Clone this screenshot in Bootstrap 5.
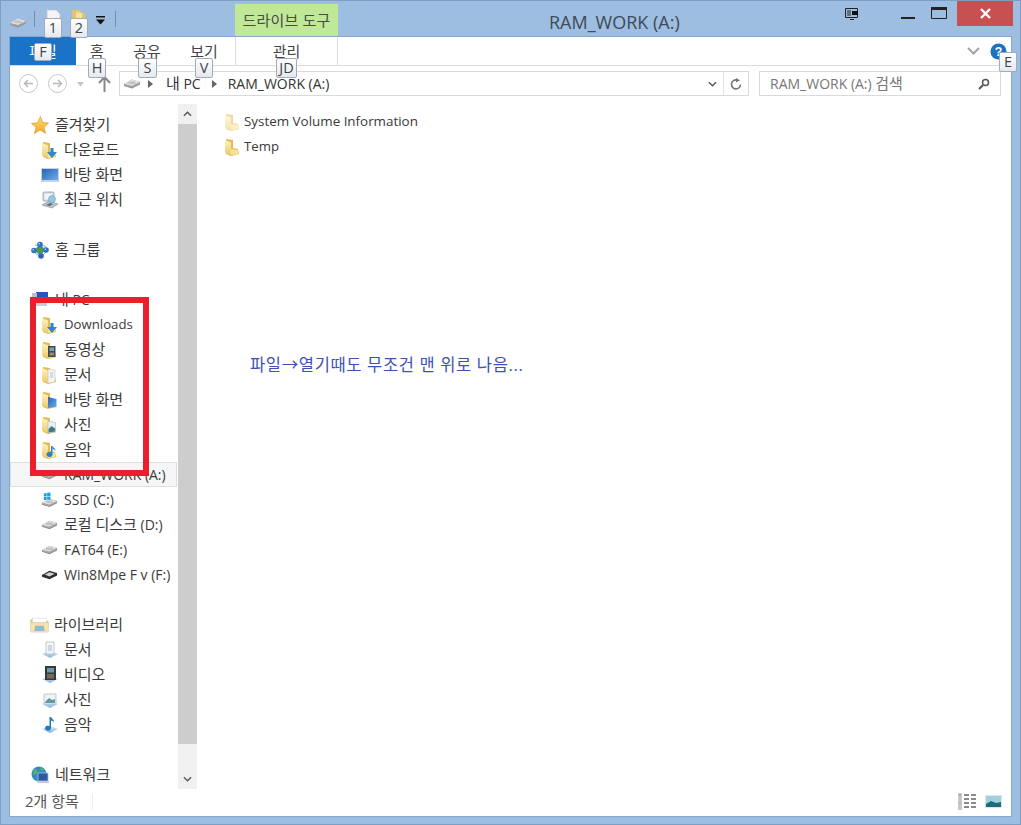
<!DOCTYPE html>
<html lang="ko">
<head>
<meta charset="utf-8">
<title>RAM_WORK (A:)</title>
<link href="https://cdn.jsdelivr.net/npm/bootstrap@5.3.0/dist/css/bootstrap.min.css" rel="stylesheet">
<style>
html,body{height:825px;overflow:hidden}
body{background:#9dbee1;font-family:"Open Sans","Noto Sans CJK KR",sans-serif;font-size:14px;color:#3a3a3a;line-height:1}
.xk{font-size:15px}
.xn{font-size:13.2px}
.xn2{font-size:13.4px}
.xw{position:relative;height:825px;width:1021px;border:1px solid #7e9fc4;padding:0 8px 8px 8px}
.xt{height:35px}
.xq{padding-top:9px;width:226px}
.xsep{width:1px;height:16px;background:#6f8db0;margin-top:1px}
.xs1{margin-left:7px;margin-right:10px}
.xs2{margin-left:9px}
.xdrv{margin-top:7px}
.xfo{margin-left:10px}
.xdd{margin-left:10px;margin-top:6px}
.xctx{width:103px;height:32px;margin-top:3px;background:#bfe997;color:#4a4a4a;text-align:center;padding-top:9px;font-size:15px;letter-spacing:.2px}
.xtitle{position:absolute;left:548px;top:12px;font-size:18px;color:#3d4a57}
.xrst{margin-top:7px;margin-right:42px}
.xmin{width:14px;height:2px;background:#222;margin-top:16px;margin-right:16px}
.xmax{margin-top:6px;margin-right:10px}
.xcl{width:56px;height:25px;background:#c75050;margin-right:-1px}
.xb{background:#fff;height:781px;border:1px solid #85a8cf}
.xrib{height:29px;border-bottom:1px solid #dadbdc;color:#444}
.xfile{width:66px;height:28px;background:#1a73c6;color:#fff;text-align:center;padding-top:7px}
.xtab{text-align:center;padding-top:7px}
.xt1{width:42px}.xt2{width:58px}.xt3{width:56px}
.xmg{border-left:1px solid #dadbdc;border-right:1px solid #dadbdc;width:103px;margin-left:3px;padding-top:7px;text-align:center}
.xchv{margin-right:10px}
.xhelp{margin-right:4px}
.xnav{height:36px;padding-top:5px}
.xbtns{width:109px;padding-left:9px;padding-top:3px}
.xroundb{width:19px;height:19px;border:1px solid #c8c8c8;border-radius:50%}
.xfw{margin-left:10px}
.xdn{margin-left:9px;margin-top:8px}
.xup{margin-left:13px;margin-top:1px}
.xaddr{width:630px;height:25px;border:1px solid #d9d9d9;color:#333}
.xad{margin-left:3px}
.xa1{margin-left:7px}
.xa2{margin-left:13px}
.xa3{margin-left:11px}
.xa4{margin-left:11px}
.xa5{margin-left:auto;margin-right:6px}
.xref{width:25px}
.xsrch{width:242px;height:25px;border:1px solid #d9d9d9;margin-left:10px;color:#777;padding:0 10px}
.xmain{height:688px}
.xside{width:187px;position:relative;flex:none;padding-top:10px}
.xrow{height:25px;display:flex;align-items:center;padding-left:21px;gap:6px;color:#3a3a3a;width:167px;white-space:nowrap}
.xsub{padding-left:31px;gap:7px}
.xg5{gap:5px}
.xg6{gap:6px}
.xlib{padding-left:20px;gap:5px}
.xgap{height:25px}
.xsel{background:#f6f6f6;outline:1px solid #dedede;outline-offset:-1px}
.xsb{position:absolute;left:168px;top:2px;width:19px;height:685px;background:#f0f0f0;display:flex;flex-direction:column}
.xsbb{height:20px;display:flex;align-items:center;justify-content:center;background:#f0f0f0}
.xth{height:620px;background:#cdcdcd}
.xtr{height:25px}
.xpane{padding:7px 0 0 27px;position:relative;flex:1}
.xitem{height:25px;display:flex;align-items:center;gap:4px}
.xnote{margin:198px 0 0 26px;color:#3c50b8;font-size:16.5px;letter-spacing:.65px}
.xst{height:27px;padding:0 9px 4px 15px;color:#555}
.xstsep{width:1px;height:16px;background:#eeeeee;margin-left:13px}
.xkt{position:absolute;height:20px;background:linear-gradient(#fff,#e4e9f2);border:1px solid #a4aab6;border-radius:2px;color:#444;font-size:14.5px;display:flex;align-items:center;justify-content:center;z-index:5}
.xred{position:absolute;left:29px;top:296px;width:119px;height:179px;border:6px solid #e8202c;z-index:6}
.k1{left:43px;top:17px;width:18px}
.k2{left:69px;top:17px;width:18px}
.kf{left:33px;top:42px;width:18px;height:18px}
.kh{left:87px;top:57px;width:18px}
.ks{left:137px;top:57px;width:19px}
.kv{left:194px;top:57px;width:18px}
.kj{left:275px;top:57px;width:21px}
.ke{left:998px;top:51px;width:18px}
</style>
</head>
<body>
<svg width="0" height="0" class="position-absolute">
<defs>
<linearGradient id="gf" x1="0" y1="0" x2="0" y2="1"><stop offset="0" stop-color="#fff3bf"/><stop offset="1" stop-color="#ecca6c"/></linearGradient>
<linearGradient id="gs" x1="0" y1="0" x2="0" y2="1"><stop offset="0" stop-color="#fde26a"/><stop offset="1" stop-color="#f0a632"/></linearGradient>
<linearGradient id="gb" x1="0" y1="0" x2="1" y2="1"><stop offset="0" stop-color="#2a62b0"/><stop offset="1" stop-color="#6aaef0"/></linearGradient>
<linearGradient id="gp" x1="0" y1="0" x2="0" y2="1"><stop offset="0" stop-color="#dff0fb"/><stop offset="1" stop-color="#7fb2dc"/></linearGradient>
<symbol id="drive" viewBox="0 0 18 11"><path d="M1 6 9 1.500 17 4v2.500L9 10.500 1 8z" fill="#8f8f8f"/><path d="M1 6 9 1.500 17 4 9 8z" fill="#e3e3e3"/><path d="M1 6 9 8.200 17 4.200v1.300L9 9.500 1 7.300z" fill="#a8a8a8"/><ellipse cx="9" cy="4.800" rx="4" ry="1.600" fill="#c3c3c3"/></symbol>
<symbol id="folder" viewBox="0 0 16 18"><path d="M2 1l7 1v8l5 1 1 5-8 2-5-2z" fill="#e3bb55"/><path d="M1 2l6 2.500V17l-6-2.500z" fill="url(#gf)"/><path d="M7 11l7 1v4l-7 1z" fill="#f6e29a"/></symbol>
<symbol id="fdown" viewBox="0 0 16 18"><use href="#folder" width="16" height="18"/><path d="M9.500 7h3v4H16l-5 6-5-6h3.500z" fill="#2f86c9"/></symbol>
<symbol id="fvid" viewBox="0 0 16 18"><use href="#folder" width="16" height="18"/><rect x="7" y="5" width="7.500" height="11" fill="#3c4c56"/><rect x="8.500" y="6.500" width="4.500" height="3.500" fill="#7da0a8"/><rect x="8.500" y="11.500" width="4.500" height="3" fill="#9a8a60"/></symbol>
<symbol id="fdoc" viewBox="0 0 16 18"><use href="#folder" width="16" height="18"/><path d="M7 3l7 1v12l-7 1z" fill="#f4f4f4" stroke="#c4c4c4" stroke-width=".6"/><path d="M9 7h3M9 9h3M9 11h3" stroke="#a7b8ca" stroke-width=".8"/></symbol>
<symbol id="fdesk" viewBox="0 0 16 18"><use href="#folder" width="16" height="18"/><path d="M7 6l8.500 2v8L7 17z" fill="url(#gb)"/></symbol>
<symbol id="fpic" viewBox="0 0 16 18"><use href="#folder" width="16" height="18"/><path d="M7 5l7.500 1.500V16L7 17z" fill="#e8f0f4" stroke="#aaa" stroke-width=".5"/><path d="M7.500 13l3-3 3.500 2.500V15.500l-6.500 1z" fill="#3d7a86"/></symbol>
<symbol id="fmus" viewBox="0 0 16 18"><use href="#folder" width="16" height="18"/><path d="M11.500 5v8.500a3 2.500 0 1 1-1.500-2.200V5z" fill="#2c7fc4"/><path d="M11.500 5c1 2 3 2 3 5-1-1.500-2-2-3-2z" fill="#2c7fc4"/></symbol>
<symbol id="star" viewBox="0 0 18 18"><path d="M9.500.500l2 6 6 .5-4.500 4.200 1.500 6L9 14l-5.500 3.500 1.600-6.300L.5 7.500l6-.7z" fill="url(#gs)" stroke="#d99a2a" stroke-width=".7"/></symbol>
<symbol id="desk" viewBox="0 0 18 14"><rect width="18" height="14" fill="#c9d2dc"/><rect x="1" y="1" width="16" height="11" fill="url(#gb)"/></symbol>
<symbol id="recent" viewBox="0 0 18 18"><rect x="2" y="1" width="11" height="9" rx="1" fill="#cfd8df" stroke="#8d9aa5" stroke-width=".7"/><rect x="3.500" y="2.500" width="8" height="6" fill="#f1f5f8"/><path d="M1 14l7-4 9 3-6 4z" fill="#b9c3cc" stroke="#7f8c97" stroke-width=".6"/><circle cx="11" cy="8" r="3.500" fill="#8fcde6" stroke="#6b8ea0" stroke-width=".5"/><path d="M5 14l4-2 3 1-3 2z" fill="#5f6c77"/></symbol>
<symbol id="home" viewBox="0 0 18 18"><path d="M4 4l10 1M4 12l6 4M14 5l1 6M10 16l5-5" stroke="#7fb0dc"/><circle cx="9" cy="9" r="4" fill="#4b9a48"/><circle cx="9" cy="3.500" r="2.800" fill="#2f6fc8"/><circle cx="3" cy="9.500" r="2.800" fill="#2f6fc8"/><circle cx="15" cy="9" r="2.800" fill="#2f6fc8"/><circle cx="10" cy="15" r="2.800" fill="#2f62b8"/><circle cx="8.300" cy="2.800" r=".8" fill="#cfe4fb"/><circle cx="2.300" cy="8.800" r=".8" fill="#cfe4fb"/><circle cx="14.300" cy="8.300" r=".8" fill="#cfe4fb"/></symbol>
<symbol id="pc" viewBox="0 0 18 18"><rect x="5" y="1" width="12" height="9" fill="#2a55b8"/><rect x="1" y="2" width="5" height="13" fill="#b8c0cc"/><path d="M4 12h12v3H4z" fill="#c8ccd4"/></symbol>
<symbol id="ssd" viewBox="0 0 18 16"><use href="#drive" y="5" width="18" height="11"/><path d="M3 1l3-.5V4H3zM6.500.4 10 0v4H6.500zM3 4.500h3V8H3zM6.500 4.500H10V8l-3.500-.5z" fill="#1ba0e2"/></symbol>
<symbol id="usb" viewBox="0 0 18 11"><path d="M1 6 9 1.500 17 4v2.500L9 10.500 1 8z" fill="#2e2e2e"/><path d="M4 5.500 9 3l5.500 1.800L9 7.500z" fill="#d2d2d2"/></symbol>
<symbol id="lib" viewBox="0 0 22 18"><path d="M1 3h7l2 2h11v12H1z" fill="#f2d487" stroke="#c9a860" stroke-width=".7"/><rect x="3" y="1" width="16" height="5" fill="#fff" stroke="#c9d0d6" stroke-width=".6"/><path d="M1 7h20v10H1z" fill="#f7e3a6"/><path d="M6 10h10l1 6H5z" fill="#8fbcd4"/></symbol>
<symbol id="ldoc" viewBox="0 0 18 18"><path d="M1 13l8-3 8 3-8 4z" fill="url(#gp)"/><path d="M5 1h8v12H5z" fill="#f4f6f8" stroke="#a9b4bf" stroke-width=".7"/><path d="M7 5h4M7 7h4M7 9h4" stroke="#96a9bd" stroke-width=".8"/></symbol>
<symbol id="lvid" viewBox="0 0 18 18"><path d="M1 13l8-3 8 3-8 4z" fill="url(#gp)"/><rect x="4" y="0" width="11" height="14" fill="#2e3a46"/><rect x="6" y="2" width="7" height="4.500" fill="#6f97a8"/><rect x="6" y="8" width="7" height="4.500" fill="#7b6a4f"/></symbol>
<symbol id="lpic" viewBox="0 0 18 18"><path d="M1 13l8-3 8 3-8 4z" fill="url(#gp)"/><path d="M3 3h12v10H3z" fill="#eef4f6" stroke="#a9b4bf" stroke-width=".7"/><path d="M4 11l4-4 3 2 3-1v4H4z" fill="#5f9aa3"/></symbol>
<symbol id="lmus" viewBox="0 0 18 18"><path d="M1 13l8-3 8 3-8 4z" fill="url(#gp)"/><path d="M10 1v11a3 2.500 0 1 1-1.500-2V1zM10 1c1 2 3 2 3 5-1-1-2-1.500-3-1.500z" fill="#2878bd"/></symbol>
<symbol id="net" viewBox="0 0 18 18"><circle cx="8" cy="8" r="7.500" fill="#2f8dc9"/><path d="M3 3c3 0 4 2 3 4S3 9 2 8zM9 1c3 1 4 2 4 4l-3-1z" fill="#5eb05a"/><rect x="7" y="7" width="10" height="8" fill="#2959a8" stroke="#b7c4d2" stroke-width=".8"/><rect x="6" y="15" width="12" height="2" fill="#c2cbd4"/></symbol>
<symbol id="chev" viewBox="0 0 10 6"><path d="M1 5l4-4 4 4" fill="none" stroke="#555" stroke-width="1.500"/></symbol>
<symbol id="chevd" viewBox="0 0 10 6"><path d="M1 1l4 4 4-4" fill="none" stroke="#555" stroke-width="1.500"/></symbol>
</defs>
</svg>

<div class="xw">
  <div class="xt d-flex">
    <div class="xq d-flex align-items-start">
      <svg class="xdrv" width="18" height="11"><use href="#drive"/></svg>
      <span class="xsep xs1"></span>
      <svg width="17" height="17" viewBox="0 0 17 17"><path d="M2 0h9l4 4v13H2z" fill="#f4f4f4" stroke="#ccc"/></svg>
      <svg class="xfo" width="13" height="17" viewBox="0 0 13 17"><path d="M0 0h8v2l5 1v13H0z" fill="#e5c566"/><path d="M4 2l6 1v11H4z" fill="#f4e39e"/></svg>
      <svg class="xdd" width="11" height="9" viewBox="0 0 11 9"><path d="M1 0h9v1.500H1z" fill="#111"/><path d="M1 3.500h9L5.500 8.500z" fill="#111"/></svg>
      <span class="xsep xs2"></span>
    </div>
    <div class="xctx">드라이브 도구</div>
    <div class="xtitle">RAM_WORK (A:)</div>
    <div class="ms-auto d-flex align-items-start">
      <svg class="xrst" width="14" height="12" viewBox="0 0 14 12"><path d="M.5.500h12v9H.5zM5 11.500h4" fill="none" stroke="#222"/><path d="M3 2v6M5 2v6" stroke="#222"/><rect x="7" y="3" width="6" height="4" fill="#111"/></svg>
      <span class="xmin d-block"></span>
      <svg class="xmax" width="16" height="12" viewBox="0 0 16 12"><path d="M.5.500h15v11H.5z" fill="none" stroke="#222"/><path d="M0 0h16v3H0z" fill="#222"/></svg>
      <span class="xcl d-flex justify-content-center align-items-center"><svg width="11" height="11" viewBox="0 0 11 11"><path d="M1 1l9 9M10 1l-9 9" stroke="#fff" stroke-width="2.400"/></svg></span>
    </div>
  </div>

  <div class="xb">
    <div class="xrib d-flex">
      <div class="xfile xk">파일</div>
      <div class="xtab xt1 xk">홈</div>
      <div class="xtab xt2 xk">공유</div>
      <div class="xtab xt3 xk">보기</div>
      <div class="xmg xk">관리</div>
      <div class="ms-auto d-flex align-items-center">
        <svg class="xchv" width="13" height="8" viewBox="0 0 13 8"><path d="M1 1l5.500 5.500L12 1" fill="none" stroke="#a3a3a3" stroke-width="2"/></svg>
        <svg class="xhelp" width="17" height="17" viewBox="0 0 18 18"><circle cx="9" cy="9" r="8.500" fill="#1e73be"/><text x="9" y="14" font-size="13" font-weight="700" text-anchor="middle" fill="#fff" font-family="Liberation Sans">?</text></svg>
      </div>
    </div>
    <div class="xnav d-flex">
      <div class="xbtns d-flex align-items-start">
        <span class="xroundb d-flex align-items-center justify-content-center"><svg width="11" height="9" viewBox="0 0 11 9"><path d="M10 4.500H2M5 1 1.500 4.500 5 8" fill="none" stroke="#b9b9b9" stroke-width="1.500"/></svg></span>
        <span class="xroundb xfw d-flex align-items-center justify-content-center"><svg width="11" height="9" viewBox="0 0 11 9"><path d="M1 4.500h8M6 1l3.500 3.500L6 8" fill="none" stroke="#b9b9b9" stroke-width="1.500"/></svg></span>
        <svg class="xdn" width="9" height="5" viewBox="0 0 9 5"><path d="M1 0h7L4.500 4.500z" fill="#c4c4c4"/></svg>
        <svg class="xup" width="13" height="17" viewBox="0 0 13 17"><path d="M6.500 17V3M1 8l5.500-6L12 8" fill="none" stroke="#888" stroke-width="2"/></svg>
      </div>
      <div class="xaddr d-flex align-items-center">
        <svg class="xad" width="18" height="11"><use href="#drive"/></svg>
        <svg class="xa1" width="5" height="8" viewBox="0 0 5 8"><path d="M0 0l5 4-5 4z" fill="#666"/></svg>
        <span class="xa2"><span class="xk">내</span> PC</span>
        <svg class="xa3" width="5" height="8" viewBox="0 0 5 8"><path d="M0 0l5 4-5 4z" fill="#666"/></svg>
        <span class="xa4">RAM_WORK (A:)</span>
        <svg class="xa5" width="9" height="6"><use href="#chevd"/></svg>
        <span class="xref d-flex align-items-center justify-content-center border-start h-100"><svg width="12" height="12" viewBox="0 0 12 12"><path d="M10.500 6.500A4.500 4.500 0 1 1 7 2" fill="none" stroke="#777" stroke-width="1.600"/><path d="M6 0l4 2.200L6 4.500z" fill="#777"/></svg></span>
      </div>
      <div class="xsrch d-flex align-items-center justify-content-between">
        <span>RAM_WORK (A:) <span class="xk">검색</span></span>
        <svg width="12" height="12" viewBox="0 0 12 12"><circle cx="7.500" cy="4.500" r="3" fill="none" stroke="#555" stroke-width="1.500"/><path d="M5 7l-4 4" stroke="#555" stroke-width="2"/></svg>
      </div>
    </div>
    <div class="xmain d-flex">
      <div class="xside">
        <div class="xrow"><svg width="18" height="20"><use href="#star"/></svg><span class="xk">즐겨찾기</span></div>
        <div class="xrow xsub"><svg width="16" height="18"><use href="#fdown"/></svg><span class="xk">다운로드</span></div>
        <div class="xrow xsub xg5"><svg width="18" height="14"><use href="#desk"/></svg><span class="xk">바탕 화면</span></div>
        <div class="xrow xsub xg5"><svg width="18" height="18"><use href="#recent"/></svg><span class="xk">최근 위치</span></div>
        <div class="xgap"></div>
        <div class="xrow"><svg width="18" height="18"><use href="#home"/></svg><span class="xk">홈 그룹</span></div>
        <div class="xgap"></div>
        <div class="xrow"><svg width="18" height="18"><use href="#pc"/></svg><span><span class="xk">내</span> PC</span></div>
        <div class="xrow xsub"><svg width="16" height="18"><use href="#fdown"/></svg><span class="xn">Downloads</span></div>
        <div class="xrow xsub"><svg width="16" height="18"><use href="#fvid"/></svg><span class="xk">동영상</span></div>
        <div class="xrow xsub"><svg width="16" height="18"><use href="#fdoc"/></svg><span class="xk">문서</span></div>
        <div class="xrow xsub"><svg width="16" height="18"><use href="#fdesk"/></svg><span class="xk">바탕 화면</span></div>
        <div class="xrow xsub"><svg width="16" height="18"><use href="#fpic"/></svg><span class="xk">사진</span></div>
        <div class="xrow xsub"><svg width="16" height="18"><use href="#fmus"/></svg><span class="xk">음악</span></div>
        <div class="xrow xsub xg6 xsel"><svg width="17" height="11"><use href="#drive"/></svg><span>RAM_WORK (A:)</span></div>
        <div class="xrow xsub xg6"><svg width="17" height="16"><use href="#ssd"/></svg><span>SSD (C:)</span></div>
        <div class="xrow xsub xg6"><svg width="17" height="11"><use href="#drive"/></svg><span><span class="xk">로컬 디스크</span> (D:)</span></div>
        <div class="xrow xsub xg6"><svg width="17" height="11"><use href="#drive"/></svg><span>FAT64 (E:)</span></div>
        <div class="xrow xsub xg6"><svg width="17" height="11"><use href="#usb"/></svg><span>Win8Mpe F v (F:)</span></div>
        <div class="xgap"></div>
        <div class="xrow xlib"><svg width="19" height="16"><use href="#lib"/></svg><span class="xk">라이브러리</span></div>
        <div class="xrow xsub xg5"><svg width="18" height="18"><use href="#ldoc"/></svg><span class="xk">문서</span></div>
        <div class="xrow xsub xg5"><svg width="18" height="18"><use href="#lvid"/></svg><span class="xk">비디오</span></div>
        <div class="xrow xsub xg5"><svg width="18" height="18"><use href="#lpic"/></svg><span class="xk">사진</span></div>
        <div class="xrow xsub xg5"><svg width="18" height="18"><use href="#lmus"/></svg><span class="xk">음악</span></div>
        <div class="xgap"></div>
        <div class="xrow"><svg width="18" height="18"><use href="#net"/></svg><span class="xk">네트워크</span></div>
        <div class="xsb">
          <div class="xsbb"><svg width="9" height="6"><use href="#chev"/></svg></div>
          <div class="xth"></div>
          <div class="xtr"></div>
          <div class="xsbb"><svg width="9" height="6"><use href="#chevd"/></svg></div>
        </div>
      </div>
      <div class="xpane">
        <div class="xitem"><svg width="16" height="18" opacity=".55"><use href="#folder"/></svg><span class="xn2">System Volume Information</span></div>
        <div class="xitem"><svg width="16" height="18"><use href="#folder"/></svg><span class="xn">Temp</span></div>
        <div class="xnote">파일→열기때도 무조건 맨 위로 나음...</div>
      </div>
    </div>
    <div class="xst d-flex align-items-center">
      <span class="xk">2개 항목</span><span class="xstsep"></span>
      <div class="ms-auto d-flex align-items-center gap-2">
        <svg width="19" height="17" viewBox="0 0 19 17"><rect width="4" height="17" fill="#c8c8c8"/><path d="M1 2h2" stroke="#d76"/><path d="M1 10h2" stroke="#9b6"/><path d="M6 2h5M13 2h5M6 6h5M13 6h5M6 10h5M13 10h5M6 14h5M13 14h5" stroke="#666" stroke-width="1.500"/></svg>
        <svg width="17" height="13" viewBox="0 0 17 13"><rect width="17" height="13" fill="#dfe6ee"/><rect x="1" y="1" width="15" height="11" fill="#9fd2de"/><path d="M1 9l5-3 5 2 5-1v5H1z" fill="#1d6d78"/></svg>
      </div>
    </div>
  </div>

  <div class="xkt k1">1</div>
  <div class="xkt k2">2</div>
  <div class="xkt kf">F</div>
  <div class="xkt kh">H</div>
  <div class="xkt ks">S</div>
  <div class="xkt kv">V</div>
  <div class="xkt kj">JD</div>
  <div class="xkt ke">E</div>
  <div class="xred"></div>
</div>
</body>
</html>
